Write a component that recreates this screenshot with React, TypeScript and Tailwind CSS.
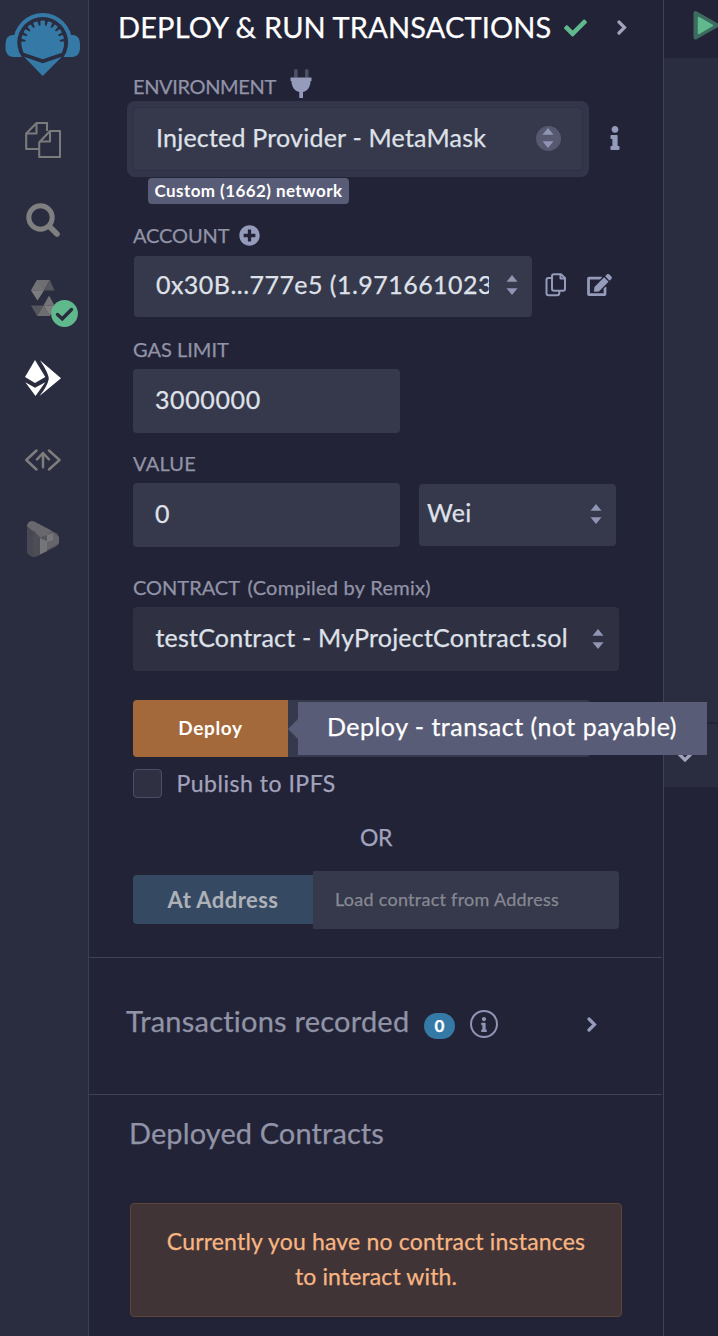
import type { ReactNode } from "react";
import { FaCheck, FaEdit, FaInfo, FaPlusCircle } from "react-icons/fa";

function RemixLogo() {
  const notches = [-84, -66, -48, -30, -10, 10, 30, 48, 66, 84];
  return (
    <svg viewBox="5 12 76 65" className="h-[65px] w-[76px]">
      <circle cx="42.7" cy="42.5" r="29.5" fill="#3579a6" />
      <path d="M0 57H86V80H0Z" fill="#2a2c3f" />
      <path d="M17 35H12Q5.500 36 5.500 44V49Q6 56 13 57H24V35ZM68.500 35H73.500Q80 36 80 44V49Q79.500 56 72.500 57H61.500V35Z" fill="#3579a6" />
      <circle cx="42.7" cy="42.5" r="25.4" fill="#2a2c3f" />
      <path d="M23.500 52.700Q21 47 21.200 42A21.500 21.500 0 0 1 64.200 42Q64.400 47 62 52.700L42.700 59.300Z" fill="#3579a6" />
      {notches.map((a) => (
        <path key={a} d="M41.100 20H44.300L43.500 25.300H41.900Z" fill="#2a2c3f" transform={`rotate(${a} 42.7 42.5)`} />
      ))}
      <path d="M24 56.700L42.700 63.300L62 56.700L42.700 76Z" fill="#3579a6" />
    </svg>
  );
}

function FilesIcon() {
  return (
    <svg viewBox="25 122 36 36" className="size-9" fill="none" stroke="#7b7b7b" strokeWidth="2.100" strokeLinejoin="round">
      <path d="M39 149H26.200V133.500L36.500 123H47V131" />
      <path d="M36.500 123V133.500H26.200" />
      <path d="M39.200 142.500L50 131H60V157H39.200Z" />
      <path d="M50 131V141.500H39.200" />
    </svg>
  );
}

function SearchIcon() {
  return (
    <svg viewBox="26 203 35 35" className="size-[35px]" fill="none" stroke="#7f7f7f" strokeLinecap="round">
      <circle cx="40.500" cy="217.500" r="11.700" strokeWidth="5" />
      <path d="M50 227L57 234" strokeWidth="5.600" />
    </svg>
  );
}

function SolidityIcon() {
  return (
    <svg viewBox="31 280 24 36" className="h-9 w-6">
      <path d="M37 280H50L44 290.500H31Z" fill="#6d6d72" />
      <path d="M50 280L54.500 290.500H44Z" fill="#56565e" />
      <path d="M37 280L44 290.500H31Z" fill="#737377" />
      <path d="M31 290.500H44L37.500 300.500Z" fill="#7d7d7f" />
      <path d="M49 295.500L54.500 305.500H43.500Z" fill="#737377" />
      <path d="M31 305.500H43.500L37 316Z" fill="#56565e" />
      <path d="M43.500 305.500L50 316H37Z" fill="#6d6d72" />
      <path d="M43.500 305.500H54.500L50 316Z" fill="#7d7d7f" />
    </svg>
  );
}

function DeployIcon() {
  return (
    <svg viewBox="25 360 36 36" className="size-9" fill="#ffffff">
      <path d="M35 360L45.300 377L35 383L25 377Z" />
      <path d="M25.300 382.300L35 387.800L45.300 382.300L35.500 396Z" />
      <path d="M40 360.300L61 378.300L39.500 396Q47.200 386.500 48.800 379Q49 374 40 360.300Z" />
    </svg>
  );
}

function CodeIcon() {
  return (
    <svg viewBox="25 448 36 24" className="h-6 w-9" fill="none" stroke="#7d7d7d" strokeWidth="2.500" strokeLinecap="round" strokeLinejoin="round">
      <path d="M36.500 450.500L26.300 460L36.500 469.500M49 450.500L59.500 460L49 469.500" />
      <path d="M43 467.300V453M37 459.300L43 453L49 459.300" />
    </svg>
  );
}

function TracerIcon() {
  return (
    <svg viewBox="26 520 34 38" className="h-[38px] w-[34px]">
      <path d="M27 526Q28 520 34 521.500L57 533.500Q59.500 535.500 59 543Q58.500 545 56 546.500L36 556.500Q30 558 27 552Z" fill="#54545d" />
      <path d="M27 526L33 530V556.500Q28 555.500 27 552Z" fill="#474853" />
      <path d="M27 526Q28 520 34 521.500L52 531L47 535L40 537.500Z" fill="#68686d" />
      <path d="M33 530L40 537.500V555L33 556.500Z" fill="#4d4d58" />
      <path d="M40 538L47 541V551L40 554.500Z" fill="#757578" />
      <path d="M47 535L53 532L59 537V543L47 550Z" fill="#65656b" />
      <path d="M47 535L53 533V540L47 542Z" fill="#77777a" />
    </svg>
  );
}

function PlugIcon() {
  return (
    <svg viewBox="290 69 22 29" className="h-[29px] w-[22px]">
      <path d="M294 70Q296 68 297.700 70V77.500H294ZM305 70Q306.800 68 308.600 70V77.500H305Z" fill="#4a4f66" />
      <path d="M290.500 77.500H311.500V81H310.500C310.500 87 307.500 91 303 92V98H299.300V92C294.800 91 291.500 87 291.500 81H290.500Z" fill="#959bbb" />
    </svg>
  );
}

function Sorter({ className = "" }: { className?: string }) {
  return (
    <svg viewBox="0 0 12 20" className={`h-5 w-3 shrink-0 ${className}`} fill="#8f95b2">
      <path d="M6 0L11.500 6.800H0.500ZM6 20L11.500 13.200H0.500Z" />
    </svg>
  );
}

function Chevron({ className = "", color = "#a2a3bd" }: { className?: string; color?: string }) {
  return (
    <svg viewBox="0 0 10 15" className={`h-[15px] w-[10px] shrink-0 ${className}`} fill="none" stroke={color} strokeWidth="3.200" strokeLinecap="round">
      <path d="M2 2L7.500 7.500L2 13" />
    </svg>
  );
}

function Label({ children, className = "" }: { children: ReactNode; className?: string }) {
  return <div className={`flex items-center whitespace-nowrap text-[20px] leading-6 text-[#9193a7] ${className}`}>{children}</div>;
}

function Sidebar() {
  return (
    <nav className="flex w-[89px] shrink-0 flex-col items-start border-r border-[#3c3e55] bg-[#2a2c3f] pt-3">
      <div className="pl-[5px]"><RemixLogo /></div>
      <div className="mt-[45px] pl-[25px]"><FilesIcon /></div>
      <div className="mt-[45px] pl-[26px]"><SearchIcon /></div>
      <div className="relative mt-[42px] ml-[31px]">
        <SolidityIcon />
        <svg viewBox="0 0 27 27" className="absolute top-5 left-5 size-[27px]">
          <circle cx="13.500" cy="13.500" r="13.400" fill="#60b98c" />
          <path d="M6.500 14.500L11.300 18.800L20.500 9.500" fill="none" stroke="#2a2c3f" strokeWidth="3.400" strokeLinecap="round" />
        </svg>
      </div>
      <div className="mt-11 pl-[25px]"><DeployIcon /></div>
      <div className="mt-[52px] pl-[25px]"><CodeIcon /></div>
      <div className="mt-12 pl-[26px]"><TracerIcon /></div>
    </nav>
  );
}

function Panel() {
  return (
    <main className="flex w-[575px] shrink-0 flex-col border-r border-[#3f4156] [-webkit-text-stroke:0.25px]">
      <header className="flex h-[55px] items-center pl-[29px] whitespace-nowrap">
        <h1 className="w-[446px] pb-px text-[29px] tracking-[0.14px] text-white">DEPLOY &amp; RUN TRANSACTIONS</h1>
        <FaCheck className="h-6 w-[23px] text-[#5fb98c]" />
        <Chevron className="ml-[30px]" />
      </header>

      <section className="flex flex-col pl-11">
        <Label className="mt-[13px] h-[30px]">
          <span className="w-[157px] pt-[5px] tracking-[-0.36px]">ENVIRONMENT</span>
          <PlugIcon />
        </Label>
        <div className="mt-[3px] -ml-1.5 flex items-center">
          <div className="flex h-[76px] w-[462px] rounded-lg bg-[#33354a] p-1.5">
            <div className="flex flex-1 items-center rounded border border-[#2e3044] bg-[#36384b] pr-[21.500px] pb-0.5 pl-[22px]">
              <span className="flex-1 text-[25px] tracking-[0.21px] whitespace-nowrap text-[#dfe1e9]">Injected Provider - MetaMask</span>
              <span className="flex size-[25px] items-center justify-center rounded-full bg-[#56596f]">
                <Sorter className="h-4" />
              </span>
            </div>
          </div>
          <FaInfo className="mb-[3px] ml-[20.500px] h-6 w-[10px] text-[#959bbb]" />
        </div>
        <div className="mt-px ml-[15px] flex h-[26px] w-[201px] items-center justify-center rounded bg-[#595c76] text-[17px] font-bold tracking-[0.42px] whitespace-nowrap text-white [-webkit-text-stroke:0px]">
          Custom (1662) network
        </div>

        <Label className="mt-[19px] h-6">
          <span className="w-[105.500px] tracking-[-0.1px]">ACCOUNT</span>
          <FaPlusCircle className="size-[21px] text-[#959bbb]" />
        </Label>
        <div className="mt-[9px] ml-px flex items-center">
          <div className="flex h-[61px] w-[398px] items-center rounded-sm bg-[#36384b] pr-3.5 pb-[3px] pl-[22px]">
            <span className="w-[333px] overflow-hidden text-[25px] tracking-[0.46px] whitespace-nowrap text-[#dfe1e9]">0x30B...777e5 (1.971661023</span>
            <Sorter className="ml-[17px]" />
          </div>
          <svg viewBox="545 273 22 24" className="mb-1 ml-[13px] h-6 w-[22px]" fill="none" stroke="#959bbb" strokeWidth="2" strokeLinejoin="round">
            <path d="M551.500 278H548.500Q546.500 278 546.500 280V293Q546.500 295.300 548.500 295.300H557Q559.300 295.300 559.300 293V291" />
            <path d="M554 274.200H561L565 278V288.500Q565 290.700 563 290.700H554Q552 290.700 552 288.500V276.200Q552 274.200 554 274.200Z" />
            <path d="M560.500 274V278.500H565" />
          </svg>
          <FaEdit className="mb-1 ml-5 h-[22px] w-[25px] text-[#959bbb]" />
        </div>

        <Label className="mt-5 h-6 tracking-[0px]">GAS LIMIT</Label>
        <div className="mt-2 flex h-16 w-[267px] items-center rounded bg-[#36384b] pb-0.5 pl-[22px] text-[25px] tracking-[0.62px] text-[#dfe1e9]">3000000</div>

        <Label className="mt-[18px] h-6 tracking-[0.2px]">VALUE</Label>
        <div className="mt-2 flex items-center">
          <div className="flex h-16 w-[267px] items-center rounded bg-[#36384b] pb-0.5 pl-[22px] text-[25px] text-[#dfe1e9]">0</div>
          <div className="ml-[19px] flex h-[62px] w-[197px] items-center rounded-sm bg-[#36384b] pr-[14px] pb-1 pl-2">
            <span className="flex-1 text-[25px] tracking-[0.3px] text-[#dfe1e9]">Wei</span>
            <Sorter className="mt-0.5" />
          </div>
        </div>

        <Label className="mt-7 h-6">
          <span className="w-[114.500px] tracking-[0px]">CONTRACT</span>
          <span className="tracking-[0.26px]">(Compiled by Remix)</span>
        </Label>
        <div className="mt-2 flex h-16 w-[486px] items-center rounded bg-[#2f3143] pr-[15px] pb-[3px] pl-[22.500px]">
          <span className="flex-1 text-[25px] tracking-[0.2px] whitespace-nowrap text-[#dfe1e9]">testContract - MyProjectContract.sol</span>
          <Sorter className="mt-0.5" />
        </div>

        <div className="relative mt-[29px] flex h-[57px]">
          <button className="w-[155px] rounded-l bg-[#a4693a] text-[19px] font-bold tracking-[0.65px] text-white [-webkit-text-stroke:0px]">Deploy</button>
          <div className="w-[302px] rounded-r bg-[#36384b]" />
          <div className="absolute top-[2px] left-[155px] z-10 flex items-center">
            <svg viewBox="0 0 10 20" className="h-5 w-2.5" fill="#595c76"><path d="M10 0V20L0 10Z" /></svg>
            <div className="flex h-[53px] w-[409px] items-center bg-[#595c76] pb-[3px] pl-[29px] text-[25px] tracking-[0.48px] whitespace-nowrap text-white">
              Deploy - transact (not payable)
            </div>
          </div>
        </div>

        <div className="mt-3 flex h-[29px] items-center">
          <span className="size-[29px] rounded border border-[#4a4d66] bg-[#2f3143]" />
          <span className="ml-[14.500px] text-[23px] tracking-[0.52px] text-[#a2a3bd]">Publish to IPFS</span>
        </div>
        <div className="mt-[25px] flex h-7 w-[486px] items-center justify-center text-[23px] tracking-[-0.41px] text-[#a2a3bd]">OR</div>
        <div className="mt-5 flex items-start">
          <button className="mt-1 h-[49px] w-[180px] rounded-l bg-[#354a62] text-[22px] font-bold tracking-[0.44px] text-[#aeb1b8] [-webkit-text-stroke:0px]">At Address</button>
          <div className="flex h-[58px] w-[306px] items-center rounded-r bg-[#36384b] pb-0.5 pl-[22px] text-[18px] tracking-[0.26px] text-[#858992]">Load contract from Address</div>
        </div>
      </section>

      <section className="mt-7 mr-px flex h-[137px] items-center border-t border-[#3f4156] pb-1 pl-[37px]">
        <h2 className="w-[298px] pb-1.5 text-[29px] tracking-[0.22px] whitespace-nowrap text-[#9193a7]">Transactions recorded</h2>
        <span className="mt-[3px] flex h-[26px] w-[31px] items-center justify-center rounded-full bg-[#3579a6] text-[17px] font-bold text-white">0</span>
        <span className="ml-[15px] flex size-7 items-center justify-center rounded-full border-2 border-[#9094b3]">
          <FaInfo className="h-[15px] w-1.5 text-[#9094b3]" />
        </span>
        <Chevron className="ml-[89px]" color="#959bbb" />
      </section>

      <section className="mr-px border-t border-[#3f4156] pl-10">
        <h2 className="mt-5 h-9 text-[29px] leading-9 tracking-[0.1px] text-[#9193a7]">Deployed Contracts</h2>
        <div className="mt-[52px] ml-px flex h-[114px] w-[492px] flex-col items-center justify-center rounded-sm border border-[#5f4539] bg-[#403437] pb-[3px] text-[23px] leading-[35px] whitespace-nowrap text-[#f8b583]">
          <p className="tracking-[0.18px]">Currently you have no contract instances</p>
          <p className="tracking-[0.12px]">to interact with.</p>
        </div>
      </section>
    </main>
  );
}

function EditorEdge() {
  return (
    <aside className="flex min-w-0 flex-1 flex-col overflow-hidden">
      <div className="h-[58px] pt-2.5 pl-[29px]">
        <svg viewBox="693 10 27 30" className="h-[30px] w-[27px]">
          <path d="M695.500 13V37.500L717 25.300Z" fill="#3d6b60" stroke="#3d6b60" strokeWidth="4" strokeLinejoin="round" />
          <path d="M698.500 17.500V33.500L712.500 25.300Z" fill="#60b98c" stroke="#60b98c" strokeWidth="1.500" strokeLinejoin="round" />
        </svg>
      </div>
      <div className="h-[664px] bg-[#2a2c3f]" />
      <div className="h-[65px] border-t-2 border-[#222336] bg-[#2a2c3f] pt-[26px] pl-4">
        <Chevron className="rotate-90" />
      </div>
    </aside>
  );
}

export default function App() {
  return (
    <div className="flex h-[1336px] w-[718px] overflow-hidden bg-[#222336] font-['Lato',sans-serif]">
      <Sidebar />
      <Panel />
      <EditorEdge />
    </div>
  );
}
